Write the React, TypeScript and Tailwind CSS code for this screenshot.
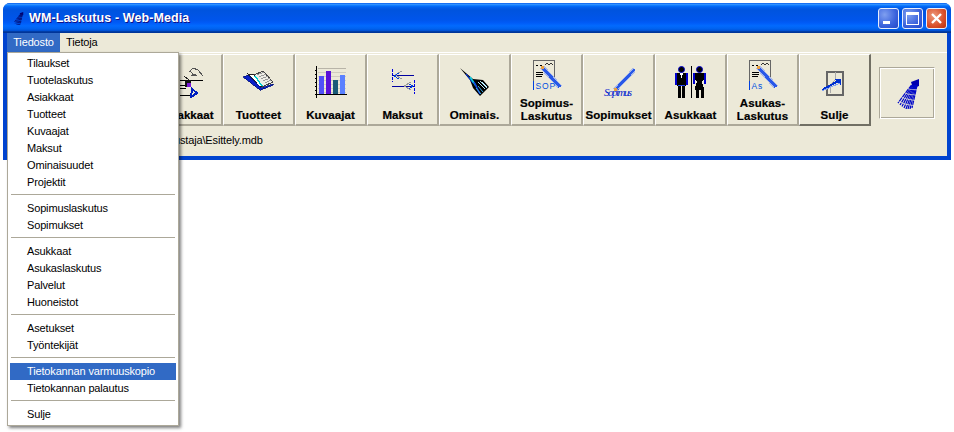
import React from "react";

const titleBg =
  "bg-[linear-gradient(180deg,#0058ee_0%,#3593ff_4%,#288eff_6%,#127dff_8%,#036ffc_10%,#0262ee_14%,#0057e5_20%,#0054de_24%,#0055eb_56%,#005bf7_66%,#026afe_76%,#0062ef_86%,#0052d6_92%,#0040ab_94%,#003092_100%)]";

function Svg({ children, size = 32 }: { children: React.ReactNode; size?: number }) {
  return (
    <svg width={size} height={size} viewBox="0 0 32 32" shapeRendering="crispEdges" className="block shrink-0">
      {children}
    </svg>
  );
}

function Hands() {
  return (
    <Svg>
      <path d="M18 6l4-4 5 2 5 6M19 4l3 5 3-1M20 9h6" fill="none" stroke="#555" />
      <path d="M9 14h23M9 29h10M9 19h8M9 22h6" stroke="#000" fill="none" />
      <path d="M13 10l5 4v3" stroke="#222" fill="none" />
      <rect x="14" y="14" width="6" height="7" fill="#111" />
      <rect x="16" y="17" width="4" height="4" fill="#7a18d8" />
      <path d="M21 23l5 4-6 4z" fill="none" stroke="#0020c0" strokeWidth="2" />
    </Svg>
  );
}

function Book() {
  return (
    <Svg>
      <path d="M11 9l9-4 10 11-11 5z" fill="#eeeee6" stroke="#444" />
      <path d="M14 9l7-3M16 11l7-3M18 13l7-3M20 15l7-3M22 17l6-3" stroke="#999" fill="none" />
      <path d="M5 8l6 1 8 11-2 1z" fill="#fff" stroke="#222" />
      <path d="M12 10l7 10" stroke="#00d0d0" strokeWidth="1.5" fill="none" />
      <path d="M0 11l5-2 13 13 12-4v1l-12 5h-1z" fill="#0a20c8" stroke="#00107a" strokeWidth="0.8" />
    </Svg>
  );
}

function Chart() {
  return (
    <Svg>
      {[2, 6, 10, 14, 18, 22, 26].map((y) => (
        <rect key={y} x="3" y={y} width="28" height="1" fill={y === 2 ? "#b8b4a8" : "#d0ccc0"} />
      ))}
      <rect x="4" y="10" width="5" height="18" fill="#5050f8" />
      <rect x="11" y="5" width="5" height="23" fill="#5a10d8" />
      <rect x="18" y="14" width="5" height="14" fill="#1a5a78" />
      <rect x="25" y="9" width="5" height="19" fill="#5a80ff" />
      <rect x="1" y="0" width="1" height="32" fill="#000" />
      {[4, 8, 12, 16, 20, 24].map((y) => (
        <rect key={y} x="0" y={y} width="2" height="1" fill="#000" />
      ))}
      <rect x="0" y="28" width="32" height="1" fill="#000" />
    </Svg>
  );
}

function Maksut() {
  return (
    <Svg>
      <path d="M5 3v13M27 14v14" stroke="#0000e0" strokeDasharray="3 1" fill="none" />
      <rect x="5" y="9" width="22" height="1" fill="#0000a0" />
      <rect x="5" y="20" width="22" height="1" fill="#0000a0" />
      <path d="M15 5l-7 4 7 4M24 16l-7 4 7 4" stroke="#999" fill="none" />
      <path d="M12 7l-5 3 5 3M22 18l4 2-4 3" stroke="#0040e0" fill="none" />
    </Svg>
  );
}

function Dart() {
  return (
    <svg width="32" height="32" viewBox="0 0 32 32" className="block shrink-0">
      <path d="M1 2l13 11 10 1 6 7-9 9-7-8-3-8z" fill="#000" />
      <path d="M7 8l7 9" stroke="#0030e0" strokeWidth="1.2" fill="none" />
      <path d="M11 11l6 9" stroke="#10d0e0" strokeWidth="1.6" fill="none" />
      <path d="M15 16l6 12" stroke="#1040e0" strokeWidth="1.6" fill="none" />
      <path d="M19 16l7 7M21 15l7 7M23 16l5 5" stroke="#b8ecff" strokeWidth="1" fill="none" />
      <path d="M17 22l5 6M19 20l5 6" stroke="#40b0e8" strokeWidth="1" fill="none" />
    </svg>
  );
}

function Doc({ label }: { label: string }) {
  return (
    <Svg>
      <path d="M2.5 22V0.5h21V20" fill="#ece9d8" stroke="#666" />
      <rect x="2" y="21" width="1" height="9" fill="#0040e0" />
      <path d="M5 5h2M9 5h2M5 12h7M5 14h7M5 16h6" stroke="#000" fill="none" />
      <path d="M14 5l2-2 2 2 2-2 2 2" stroke="#333" fill="none" />
      <path d="M11 7l18 20" stroke="#a8b8e8" strokeWidth="5" fill="none" />
      <path d="M11 7l18 20" stroke="#2858e8" strokeWidth="3" fill="none" />
      <rect x="10" y="6" width="3" height="3" fill="#e8a040" />
      <text x="4.5" y="29" fontFamily="Liberation Sans, sans-serif" fontSize="8.5" fill="#0050e0" letterSpacing="0.8">
        {label}
      </text>
    </Svg>
  );
}

function Sign() {
  return (
    <Svg>
      <path d="M12 24L32 3" stroke="#a8b8e8" strokeWidth="4.5" fill="none" />
      <path d="M12 24L32 3" stroke="#2858e8" strokeWidth="2.5" fill="none" />
      <rect x="11" y="22" width="3" height="3" fill="#e8a040" />
      <text x="1" y="30" fontFamily="Liberation Serif, serif" fontStyle="italic" fontSize="11" fill="#0020d0" textLength="28">
        Sopimus
      </text>
    </Svg>
  );
}

function People() {
  return (
    <Svg>
      <rect x="16" y="0" width="1" height="32" fill="#000" />
      <circle cx="6.5" cy="3.5" r="3" fill="#000" stroke="#0000d0" shapeRendering="auto" />
      <circle cx="24.5" cy="3.5" r="3" fill="#000" stroke="#0000d0" shapeRendering="auto" />
      <rect x="0" y="7" width="2" height="12" fill="#0000d0" />
      <rect x="11" y="7" width="2" height="12" fill="#0000d0" />
      <rect x="2" y="7" width="9" height="13" fill="#000" />
      <path d="M5 7h3l-1.5 5z" fill="#fff" />
      <rect x="3" y="19" width="7" height="1" fill="#2040f0" />
      <rect x="3" y="20" width="3" height="12" fill="#000" />
      <rect x="7" y="20" width="3" height="12" fill="#000" />
      <rect x="18" y="7" width="2" height="11" fill="#0000d0" />
      <rect x="29" y="7" width="2" height="11" fill="#0000d0" />
      <path d="M20 7h9v6l-2 3 2 6v2H20v-2l2-6-2-3z" fill="#000" />
      <rect x="21" y="24" width="3" height="8" fill="#000" />
      <rect x="26" y="24" width="3" height="8" fill="#000" />
    </Svg>
  );
}

function Door() {
  return (
    <Svg>
      <rect x="7.5" y="5.5" width="16" height="23" fill="#ece9d8" stroke="#666" strokeWidth="2" />
      <path d="M16 6v8l-5 5v8" stroke="#aaa" fill="none" />
      <path d="M3 24L21 14" stroke="#0030d0" strokeWidth="2" fill="none" />
      <path d="M15 13h7v6z" fill="#0030d0" />
      <path d="M3 25L21 17" stroke="#80a0f0" fill="none" />
    </Svg>
  );
}

function Shower({ small = false }: { small?: boolean }) {
  const ends = [
    [7, 26], [9, 28], [11, 29.5], [13, 31], [15, 32], [17, 32], [19, 32], [21, 31],
  ];
  return (
    <svg width={small ? 14 : 32} height={small ? 18 : 32} viewBox="0 0 32 32" className="block shrink-0">
      <path d="M20 5l8-3v7l-6 2z" fill={small ? "#000070" : "#0000b0"} />
      {ends.map(([x, y], i) => (
        <line
          key={i}
          x1={20.5 + i * 0.8}
          y1={8}
          x2={x}
          y2={y}
          stroke={small ? "#00107a" : "#0008c8"}
          strokeWidth={small ? 1.8 : 1.25}
          strokeDasharray={small ? "6 1.5" : "4.5 0.8"}
        />
      ))}
    </svg>
  );
}

const buttons: { label: string[]; icon: React.ReactNode }[] = [
  { label: [], icon: <Svg>{null}</Svg> },
  { label: [], icon: <Svg>{null}</Svg> },
  { label: ["Asiakkaat"], icon: <Hands /> },
  { label: ["Tuotteet"], icon: <Book /> },
  { label: ["Kuvaajat"], icon: <Chart /> },
  { label: ["Maksut"], icon: <Maksut /> },
  { label: ["Ominais."], icon: <Dart /> },
  { label: ["Sopimus-", "Laskutus"], icon: <Doc label="SOP" /> },
  { label: ["Sopimukset"], icon: <Sign /> },
  { label: ["Asukkaat"], icon: <People /> },
  { label: ["Asukas-", "Laskutus"], icon: <Doc label="As" /> },
  { label: ["Sulje"], icon: <Door /> },
];

function ToolButton({ label, icon, last }: { label: string[]; icon: React.ReactNode; last: boolean }) {
  const two = label.length > 1;
  return (
    <div
      className={`flex h-[72px] w-[72px] flex-col items-center border-t border-l border-t-white border-l-white border-b-2 border-r-2 ${
        last ? "border-b-[#716f64] border-r-[#716f64]" : "border-b-[#aca899] border-r-[#aca899]"
      } ${two ? "pt-[5px]" : "pt-[11px]"}`}
    >
      {icon}
      <div className={`text-center font-['Liberation_Sans',sans-serif] text-[11.5px] leading-[13px] font-bold tracking-[0.1px] text-black [-webkit-text-stroke:0.2px_#000] ${two ? "mt-[5px]" : "mt-[11px]"}`}>
        {label.map((l) => (
          <div key={l}>{l}</div>
        ))}
      </div>
    </div>
  );
}

const menu: (string | null)[] = [
  "Tilaukset", "Tuotelaskutus", "Asiakkaat", "Tuotteet", "Kuvaajat", "Maksut", "Ominaisuudet", "Projektit", null,
  "Sopimuslaskutus", "Sopimukset", null,
  "Asukkaat", "Asukaslaskutus", "Palvelut", "Huoneistot", null,
  "Asetukset", "Työntekijät", null,
  "Tietokannan varmuuskopio", "Tietokannan palautus", null,
  "Sulje",
];

function WinButton({ kind }: { kind: "min" | "max" | "close" }) {
  const bg =
    kind === "close"
      ? "bg-[radial-gradient(circle_at_35%_35%,#ee9a7c,#d84f2a_60%,#b8300f)]"
      : "bg-[radial-gradient(circle_at_30%_30%,#7f9ff0,#3a62dc_60%,#2348c8)]";
  return (
    <div className={`flex h-[21px] w-[21px] items-center justify-center rounded-[3px] border border-[#e8eefc] ${bg}`}>
      {kind === "min" && <div className="mt-[8px] mr-[4px] h-[3px] w-[7px] bg-white" />}
      {kind === "max" && <div className="h-[13px] w-[13px] border border-t-[3px] border-white" />}
      {kind === "close" && (
        <svg width="13" height="13" viewBox="0 0 13 13">
          <path d="M2 2l9 9M11 2l-9 9" stroke="#fff" strokeWidth="2.4" />
        </svg>
      )}
    </div>
  );
}

export default function App() {
  return (
    <div className="relative h-[432px] w-[954px] overflow-hidden bg-white pt-[3px] pl-[3px] font-['Liberation_Sans',sans-serif] tracking-[-0.15px]">
      <div className="h-[157px] w-[948px] rounded-t-[7px] bg-[#0043cf]">
        <div className={`flex h-[30px] items-center rounded-t-[7px] pr-[4px] pl-[8px] ${titleBg}`}>
          <Shower small />
          <span className="ml-[4px] font-['Liberation_Sans',sans-serif] text-[12.5px] font-bold tracking-[0.1px] text-white [text-shadow:1px_1px_0_#0f1089]">
            WM-Laskutus - Web-Media
          </span>
          <div className="ml-auto flex gap-[3px]">
            <WinButton kind="min" />
            <WinButton kind="max" />
            <WinButton kind="close" />
          </div>
        </div>
        <div className="mx-[4px] h-[123px] bg-[#ece9d8]">
          <div className="flex h-[19px] items-stretch text-[11px] text-black">
            <div className="flex w-[53px] items-center justify-center bg-[#316ac5] text-white">Tiedosto</div>
            <div className="flex items-center pl-[6px]">Tietoja</div>
          </div>
          <div className="h-[2px] border-t border-white" />
          <div className="flex items-start">
            <div className="flex">
              {buttons.map((b, i) => (
                <ToolButton key={i} label={b.label} icon={b.icon} last={i === buttons.length - 1} />
              ))}
            </div>
            <div className="mt-[13px] ml-[8px] flex h-[52px] w-[56px] items-center justify-center border border-t-[#aca899] border-l-[#aca899] border-r-white border-b-white bg-[#ece9d8] shadow-[inset_1px_1px_0_#fff,inset_-1px_-1px_0_#aca899]">
              <Shower />
            </div>
          </div>
          <div className="mt-[8px] pl-[167px] text-[11px] leading-[13px] text-black">ustaja\Esittely.mdb</div>
        </div>
      </div>

      <div className="absolute top-[52px] left-[7px] w-[172px] border border-[#aca899] bg-white px-[2px] pt-[2px] pb-[2px] text-[11px] text-black shadow-[2px_2px_3px_rgba(0,0,0,0.5)]">
        {menu.map((m, i) =>
          m === null ? (
            <div key={i} className="flex h-[9px] items-start px-[1px] pt-[3px]">
              <div className="h-px w-full bg-[#aca899]" />
            </div>
          ) : (
            <div
              key={i}
              className={`flex h-[17px] items-center pl-[17px] ${m === "Tietokannan varmuuskopio" ? "bg-[#316ac5] text-white" : ""}`}
            >
              {m}
            </div>
          ),
        )}
      </div>
    </div>
  );
}
